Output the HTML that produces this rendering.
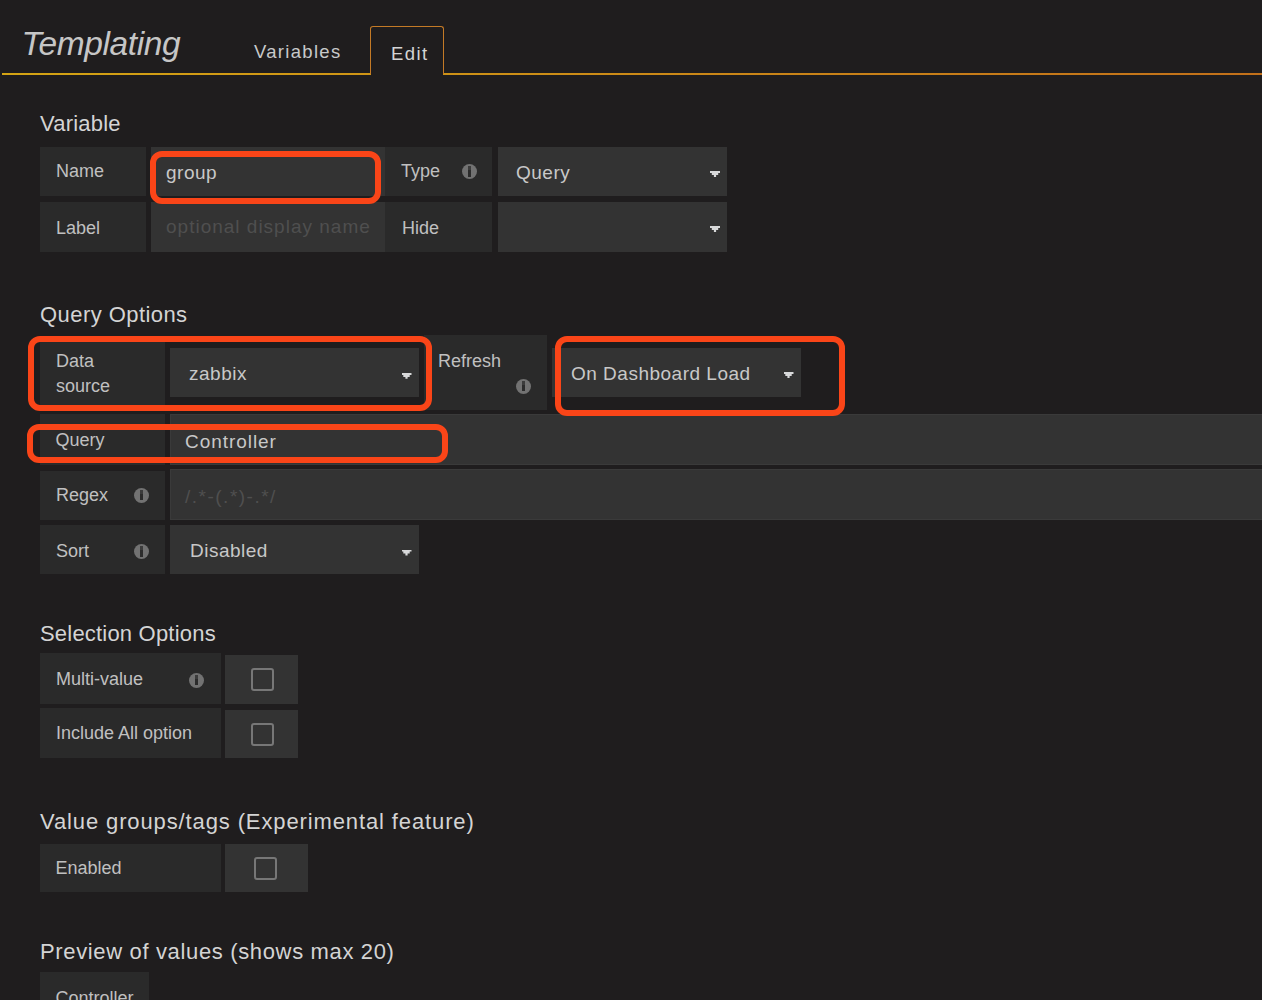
<!DOCTYPE html>
<html><head><meta charset="utf-8">
<style>
html,body{margin:0;padding:0;}
body{width:1262px;height:1000px;overflow:hidden;background:#1f1d1e;position:relative;font-family:"Liberation Sans",sans-serif;color:#d8d9da;}
.b{position:absolute;}
.lab{position:absolute;background:#2a2a2a;}
.inp{position:absolute;background:#333333;}
.t{position:absolute;white-space:nowrap;line-height:1;}
.lt{font-size:18px;color:#c0c0c0;}
.it{font-size:19px;color:#c8c8c8;letter-spacing:0.5px;}
.h{font-size:22px;color:#d4d4d4;letter-spacing:0.2px;}
.ico{position:absolute;width:15px;height:15px;border-radius:50%;background:#727272;}
.ico:before{content:"";position:absolute;left:5.8px;top:2.4px;width:3.3px;height:4px;background:#3c3c3c;}
.ico:after{content:"";position:absolute;left:5.8px;top:6.4px;width:3.3px;height:6.6px;background:#2c2c2c;}
.caret{position:absolute;width:10px;height:6px;background:#d8d9da;clip-path:polygon(0 0,10px 0,10px 2.1px,8.2px 2.1px,8.2px 4.1px,6.1px 4.1px,6.1px 6px,3.9px 6px,3.9px 4.1px,1.8px 4.1px,1.8px 2.1px,0 2.1px);}
.cb{position:absolute;width:19px;height:19px;border:2px solid #777;border-radius:3px;box-sizing:content-box;}
.ann{position:absolute;border:6px solid #fa4518;border-radius:12px;box-sizing:border-box;}
</style></head>
<body>
<!-- header -->
<div class="t" id="templating" style="left:21.5px;top:26.8px;font-size:33.5px;letter-spacing:-0.4px;font-style:italic;color:#c6c6c6;">Templating</div>
<div class="t" id="variables" style="left:254px;top:43px;font-size:18.5px;color:#c8c9ca;letter-spacing:1.3px;">Variables</div>
<div class="b" style="left:2px;top:73px;width:369px;height:2px;background:linear-gradient(to right,#d4a414,#c2701a);background-size:1260px 2px;background-position:0 0;"></div>
<div class="b" style="left:443px;top:73px;width:819px;height:2px;background:linear-gradient(to right,#d4a414,#c2701a);background-size:1260px 2px;background-position:-441px 0;"></div>
<div class="b" style="left:370px;top:26.3px;width:72px;height:47px;border:1.9px solid #c47a26;border-bottom:none;border-radius:3px 3px 0 0;"></div>
<div class="t" id="edit" style="left:391px;top:44.8px;font-size:18.5px;color:#d4d4d4;letter-spacing:1.4px;">Edit</div>

<!-- Variable -->
<div class="t h" id="hvariable" style="left:40px;top:113px;">Variable</div>
<div class="lab" style="left:40px;top:147px;width:106px;height:49px;"></div>
<div class="lab" style="left:40px;top:201.5px;width:106px;height:50px;"></div>
<div class="t lt" id="name" style="left:56px;top:162px;">Name</div>
<div class="t lt" id="label" style="left:56px;top:218.5px;">Label</div>
<div class="inp" style="left:151px;top:147px;width:234px;height:49px;"></div>
<div class="inp" style="left:151px;top:201.5px;width:234px;height:50px;"></div>
<div class="t it" id="group" style="left:166px;top:163px;">group</div>
<div class="t it" id="optional" style="left:166px;top:217px;color:#4f4f4f;letter-spacing:1px;">optional display name</div>
<div class="lab" style="left:385px;top:147px;width:107px;height:49px;"></div>
<div class="lab" style="left:385px;top:201.5px;width:107px;height:50px;"></div>
<div class="t lt" id="type" style="left:401px;top:162px;">Type</div>
<div class="ico" style="left:462px;top:164px;"></div>
<div class="t lt" id="hide" style="left:402px;top:218.5px;">Hide</div>
<div class="inp" style="left:498px;top:147px;width:229px;height:49px;"></div>
<div class="inp" style="left:498px;top:201.5px;width:229px;height:50px;"></div>
<div class="t it" id="query1" style="left:516px;top:163px;">Query</div>
<div class="caret" style="left:710px;top:171px;"></div>
<div class="caret" style="left:710px;top:226px;"></div>

<!-- Query Options -->
<div class="t h" id="hquery" style="left:40px;top:304px;letter-spacing:0.44px;">Query Options</div>
<div class="lab" style="left:40px;top:336px;width:125px;height:74px;"></div>
<div class="t lt" id="data" style="left:56px;top:348.6px;line-height:25.3px;">Data<br>source</div>
<div class="inp" style="left:170px;top:348px;width:248.5px;height:49px;"></div>
<div class="t it" id="zabbix" style="left:189px;top:364px;">zabbix</div>
<div class="caret" style="left:401.5px;top:372.8px;"></div>
<div class="lab" style="left:424px;top:335.2px;width:123px;height:75.2px;"></div>
<div class="t lt" id="refresh" style="left:438px;top:352px;">Refresh</div>
<div class="ico" style="left:516px;top:378.5px;"></div>
<div class="inp" style="left:552px;top:348px;width:249px;height:49px;"></div>
<div class="t it" id="odl" style="left:571px;top:364px;">On Dashboard Load</div>
<div class="caret" style="left:783.5px;top:372px;"></div>

<div class="lab" style="left:40px;top:414.3px;width:125px;height:50.3px;"></div>
<div class="t lt" id="qlabel" style="left:55.5px;top:431px;">Query</div>
<div class="inp" style="left:170px;top:414px;width:1092px;height:51px;border:1px solid #3a3a3a;box-sizing:border-box;border-right:none;"></div>
<div class="t it" id="controller" style="left:185px;top:432px;letter-spacing:0.95px;">Controller</div>

<div class="lab" style="left:40px;top:470.5px;width:125px;height:49.5px;"></div>
<div class="t lt" id="regex" style="left:56px;top:486px;">Regex</div>
<div class="ico" style="left:134px;top:487.5px;"></div>
<div class="inp" style="left:170px;top:469px;width:1092px;height:51px;border:1px solid #3a3a3a;box-sizing:border-box;border-right:none;"></div>
<div class="t it" id="regexph" style="left:185px;top:487px;color:#4f4f4f;letter-spacing:1.5px;">/.*-(.*)-.*/</div>

<div class="lab" style="left:40px;top:525px;width:125px;height:49px;"></div>
<div class="t lt" id="sort" style="left:56px;top:542px;">Sort</div>
<div class="ico" style="left:134px;top:544px;"></div>
<div class="inp" style="left:170px;top:525px;width:248.5px;height:49px;"></div>
<div class="t it" id="disabled" style="left:190px;top:541px;">Disabled</div>
<div class="caret" style="left:401.5px;top:549.5px;"></div>

<!-- Selection Options -->
<div class="t h" id="hsel" style="left:40px;top:623px;">Selection Options</div>
<div class="lab" style="left:40px;top:653.3px;width:181.3px;height:50.7px;"></div>
<div class="t lt" id="multi" style="left:56px;top:670px;">Multi-value</div>
<div class="ico" style="left:189px;top:672.5px;"></div>
<div class="inp" style="left:225.3px;top:655px;width:72.7px;height:49px;"></div>
<div class="cb" style="left:251px;top:668.3px;"></div>
<div class="lab" style="left:40px;top:708px;width:181.3px;height:50.2px;"></div>
<div class="t lt" id="incall" style="left:56px;top:724px;">Include All option</div>
<div class="inp" style="left:225.3px;top:709.8px;width:72.7px;height:48.4px;"></div>
<div class="cb" style="left:251px;top:723.3px;"></div>

<!-- Value groups -->
<div class="t h" id="hval" style="left:40px;top:811px;letter-spacing:0.88px;">Value groups/tags (Experimental feature)</div>
<div class="lab" style="left:40px;top:843.7px;width:181.4px;height:48.3px;"></div>
<div class="t lt" id="enabled" style="left:55.5px;top:858.5px;">Enabled</div>
<div class="inp" style="left:225px;top:843.7px;width:82.8px;height:48.3px;"></div>
<div class="cb" style="left:254.3px;top:856.5px;"></div>

<!-- Preview -->
<div class="t h" id="hprev" style="left:40px;top:941px;letter-spacing:0.65px;">Preview of values (shows max 20)</div>
<div class="lab" style="left:40px;top:971.5px;width:109.2px;height:40px;"></div>
<div class="t lt" id="prevctl" style="left:55.5px;top:989px;">Controller</div>

<!-- annotations -->
<div class="ann" style="left:150.3px;top:151.3px;width:230.3px;height:53px;"></div>
<div class="ann" style="left:28.3px;top:336.4px;width:403.4px;height:74.6px;"></div>
<div class="ann" style="left:26.6px;top:423.8px;width:421.7px;height:39.3px;"></div>
<div class="ann" style="left:554.8px;top:336.4px;width:290.7px;height:79.9px;"></div>
</body></html>
